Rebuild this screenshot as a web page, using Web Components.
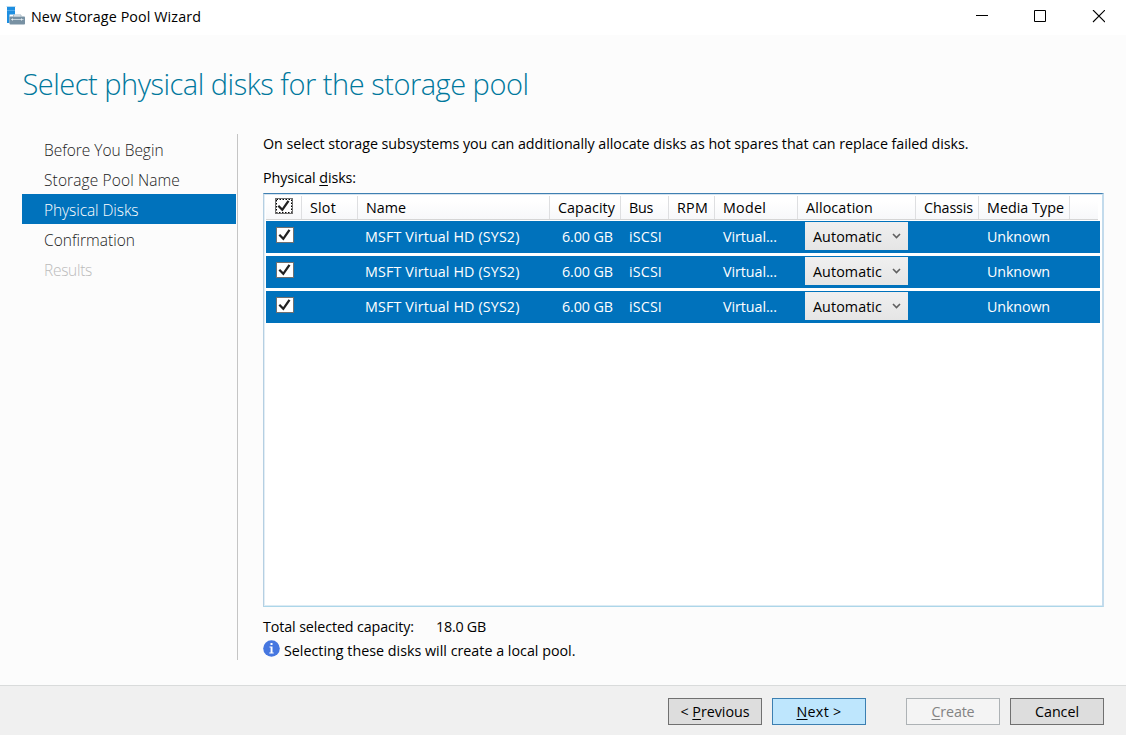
<!DOCTYPE html>
<html lang="en">
<head>
<meta charset="utf-8">
<title>New Storage Pool Wizard</title>
<style>
html,body{margin:0;height:100%;overflow:hidden}
body{font:14.3px/20px "Open Sans","Noto Sans",sans-serif;color:#000;background:#fcfcfc}
</style>
</head>
<body>
<wizard-window></wizard-window>
<script>
const define=(name,html,init)=>{
  const t=document.createElement('template');t.innerHTML=html;
  customElements.define(name,class extends HTMLElement{
    connectedCallback(){
      if(this.shadowRoot)return;
      this.attachShadow({mode:'open'}).append(t.content.cloneNode(true));
      if(init)init(this,this.shadowRoot);
    }
  });
};

/* One line of text whose tracking is tuned so that it spans the w attribute. */
define('fit-text',`<style>:host{display:inline-block;white-space:pre;flex:none}span{display:inline-block}</style><span><slot></slot></span>`,(el,root)=>{
  const w=+el.getAttribute('w');if(!w)return;
  const s=root.querySelector('span');
  const n=el.textContent.length;
  s.style.letterSpacing=((w-s.getBoundingClientRect().width)/n).toFixed(4)+'px';
});

define('server-icon',`<style>:host{display:block;width:20px;height:20px}svg{display:block}</style>
<svg width="20" height="20" viewBox="0 0 20 20"><path d="M1 2h8v7.500H3.500V18H1z" fill="#1e8ee0"/><path d="M.5 1.500h9" stroke="#b9daf0"/><path d="M1 5.500h8" stroke="#5db0ec" stroke-width=".8"/><path d="M7.500 11.500V10h7.500v1.500" fill="none" stroke="#a9bac5"/><rect x="3.500" y="11.500" width="15.500" height="8" rx=".8" fill="#7891a3"/><path d="M5 14.500h12.500" stroke="#c5d3dc"/><path d="M6.500 13.500v2M15.500 13.500v2" stroke="#e6edf1"/></svg>`);

define('title-bar',`<style>
:host{display:flex;height:35px;background:#fff;align-items:flex-start;box-sizing:border-box;padding-left:6px}
server-icon{margin-top:5px}.t{margin:7px 0 0 5px}
svg{display:block;margin:10px 21px 0 auto}
</style><server-icon></server-icon><div class="t"><fit-text w="170">New Storage Pool Wizard</fit-text></div>
<svg width="130" height="13" viewBox="975 10 130 13" fill="none" stroke="#000"><path d="M976 15.500h12"/><path d="M1034.500 10.500h11v11h-11z"/><path d="M1093 10l12 12M1105 10l-12 12" stroke-width="1.100"/></svg>`);

define('nav-step',`<style>
:host{display:flex;height:30px;align-items:center;padding-left:22px;font-weight:300;font-size:15.500px;color:#222}
:host([selected]){background:#0072bc;color:#fff}
:host([disabled]){color:#bbb}
div{margin-top:1px}
</style><div><slot></slot></div>`);

define('check-box',`<style>:host{display:block;width:18px;height:16px}svg{display:block}.d{display:none}:host([focused]) .d{display:block}:host([focused]) .b{display:none}</style>
<svg width="18" height="16" viewBox="0 0 18 16"><rect class="b" x=".5" y=".5" width="17" height="15" fill="#fff" stroke="#707070"/><g class="d"><rect x=".5" y=".5" width="17" height="15" fill="#fff" stroke="#707070"/><rect x="1.500" y="1.500" width="15" height="13" fill="none" stroke="#000" stroke-dasharray="1.500 1.500"/></g><path d="M3.300 7.800L7.300 11.800L13.500 2.800" fill="none" stroke="#212121" stroke-width="2.300"/></svg>`);

define('drop-down',`<style>
:host{display:flex;box-sizing:border-box;width:103px;height:28px;padding:0 7px 0 8px;align-items:center;justify-content:space-between;background:linear-gradient(#f0f0f0,#e5e5e5);color:#000}
div{padding-top:2px;display:flex}
svg{display:block;margin-top:-1px}
</style><div><slot></slot></div><svg width="9" height="6" viewBox="0 0 9 6"><path d="M1 1l3.500 3.500L8 1" fill="none" stroke="#606060" stroke-width="1.600"/></svg>`);

const cols='grid-template-columns:36px 56px 192px 71px 48px 46px 83px 118px 63px 91px 1fr;';
define('disk-header',`<style>
:host{display:grid;${cols}height:24px;margin-right:2px;background:linear-gradient(#fff 20%,#f7f8fa);border-bottom:1px solid #d5d5d5;box-sizing:border-box}
div{display:flex;align-items:center;padding-left:8px;border-right:1px solid #dedfe1;min-width:0}
div:last-child{border:0}check-box{margin-top:-3px;margin-left:1px}
</style>
<div><check-box focused></check-box></div><div><fit-text w="26">Slot</fit-text></div><div><fit-text w="40">Name</fit-text></div><div><fit-text w="57">Capacity</fit-text></div><div><fit-text w="24">Bus</fit-text></div><div><fit-text w="31">RPM</fit-text></div><div><fit-text w="43">Model</fit-text></div><div><fit-text w="67">Allocation</fit-text></div><div><fit-text w="49">Chassis</fit-text></div><div><fit-text w="77">Media Type</fit-text></div><div></div>`);

define('disk-row',`<style>
:host{display:grid;${cols}height:32px;background:#0072bc;color:#fff}
div{display:flex;align-items:center;padding-left:8px;min-width:0}
.c{padding-left:10px}check-box{margin-top:-4px}.n{padding-left:7px}.r{padding:0 8px 0 0;justify-content:flex-end}.a{padding-left:7px;align-items:flex-start;padding-top:1px}
</style>
<div class="c"><check-box></check-box></div><div></div><div class="n"><fit-text w="154.500">MSFT Virtual HD (SYS2)</fit-text></div><div class="r"><fit-text w="51">6.00 GB</fit-text></div><div><fit-text w="33">iSCSI</fit-text></div><div></div><div><fit-text w="54">Virtual...</fit-text></div><div class="a"><drop-down><fit-text w="69">Automatic</fit-text></drop-down></div><div></div><div><fit-text w="63">Unknown</fit-text></div><div></div>`);

define('disk-list',`<style>
:host{display:flex;flex-direction:column;box-sizing:border-box;height:414px;background:#fff;border:solid;border-width:1px 2px 1px 1px;border-color:#3f80b2 #c3dbec #acd6e9 #b5cfe2;padding:2px 2px 0;box-shadow:inset 0 1px #d6e3ee,inset 1px 0 #e2edf5,inset 0 -1px #dcebf4}
.rows{display:grid;gap:3px;margin-top:1px}
</style><disk-header></disk-header><div class="rows"><disk-row></disk-row><disk-row></disk-row><disk-row></disk-row></div>`);

define('info-icon',`<style>:host{display:block}svg{display:block}</style><svg width="17" height="17" viewBox="0 0 17 17"><circle cx="8.500" cy="8.500" r="8.300" fill="#4677e0"/><path d="M7.500 3h2v2h-2zM6.500 6.500h3v6h1.200v1H6.300v-1h1.300v-5H6.500z" fill="#fff"/></svg>`);

define('push-button',`<style>
:host{display:flex;box-sizing:border-box;width:94px;height:27px;border:1px solid #707070;background:#ddd;align-items:center;justify-content:center}
:host([primary]){border-color:#3c7fb1;background:#bee6fd}
:host([disabled]){border-color:#adb2b5;background:#f4f4f4;color:#838383}
</style><slot></slot>`);

define('wizard-window',`<style>
:host{display:flex;flex-direction:column;height:735px;width:1126px;background:#fcfcfc}
h1{margin:0;box-sizing:border-box;height:99px;padding:29px 0 0 22.500px;font-weight:300;font-size:29px;line-height:40px;color:#00789c}
main{display:flex;height:551px}
nav{margin-left:22px;width:214px;height:526px;padding-right:1px;border-right:1px solid #c5c5c5}
section{margin-left:25px;width:841px}
.intro{height:34px}.label{height:25px}
.total{display:flex;gap:22px;margin-top:10px;height:22px}
.info{display:flex;gap:4px}.info fit-text{margin-top:2px}info-icon{margin-top:1px}
footer{display:flex;flex:1;border-top:1px solid #d9dbdb;background:#f0f0f0;padding:12px 22px 0 0;justify-content:flex-end;gap:10px;align-items:flex-start}
.gap{margin-left:30px}u{text-underline-offset:2px;text-decoration-thickness:1px;text-decoration-skip-ink:none}
</style>
<title-bar></title-bar>
<h1><fit-text w="506">Select physical disks for the storage pool</fit-text></h1>
<main><nav><nav-step><fit-text w="119.500">Before You Begin</fit-text></nav-step><nav-step><fit-text w="136">Storage Pool Name</fit-text></nav-step><nav-step selected><fit-text w="94.500">Physical Disks</fit-text></nav-step><nav-step><fit-text w="91">Confirmation</fit-text></nav-step><nav-step disabled><fit-text w="48">Results</fit-text></nav-step></nav>
<section><div class="intro"><fit-text w="705.500">On select storage subsystems you can additionally allocate disks as hot spares that can replace failed disks.</fit-text></div>
<div class="label"><fit-text w="93">Physical <u>d</u>isks:</fit-text></div>
<disk-list></disk-list>
<div class="total"><fit-text w="151">Total selected capacity:</fit-text><fit-text w="50">18.0 GB</fit-text></div>
<div class="info"><info-icon></info-icon><fit-text w="291.500">Selecting these disks will create a local pool.</fit-text></div>
</section></main>
<footer><push-button><fit-text w="69">&lt; <u>P</u>revious</fit-text></push-button><push-button primary><fit-text w="45"><u>N</u>ext &gt;</fit-text></push-button><push-button class="gap" disabled><fit-text w="43"><u>C</u>reate</fit-text></push-button><push-button><fit-text w="44">Cancel</fit-text></push-button></footer>`);
</script>
</body>
</html>
